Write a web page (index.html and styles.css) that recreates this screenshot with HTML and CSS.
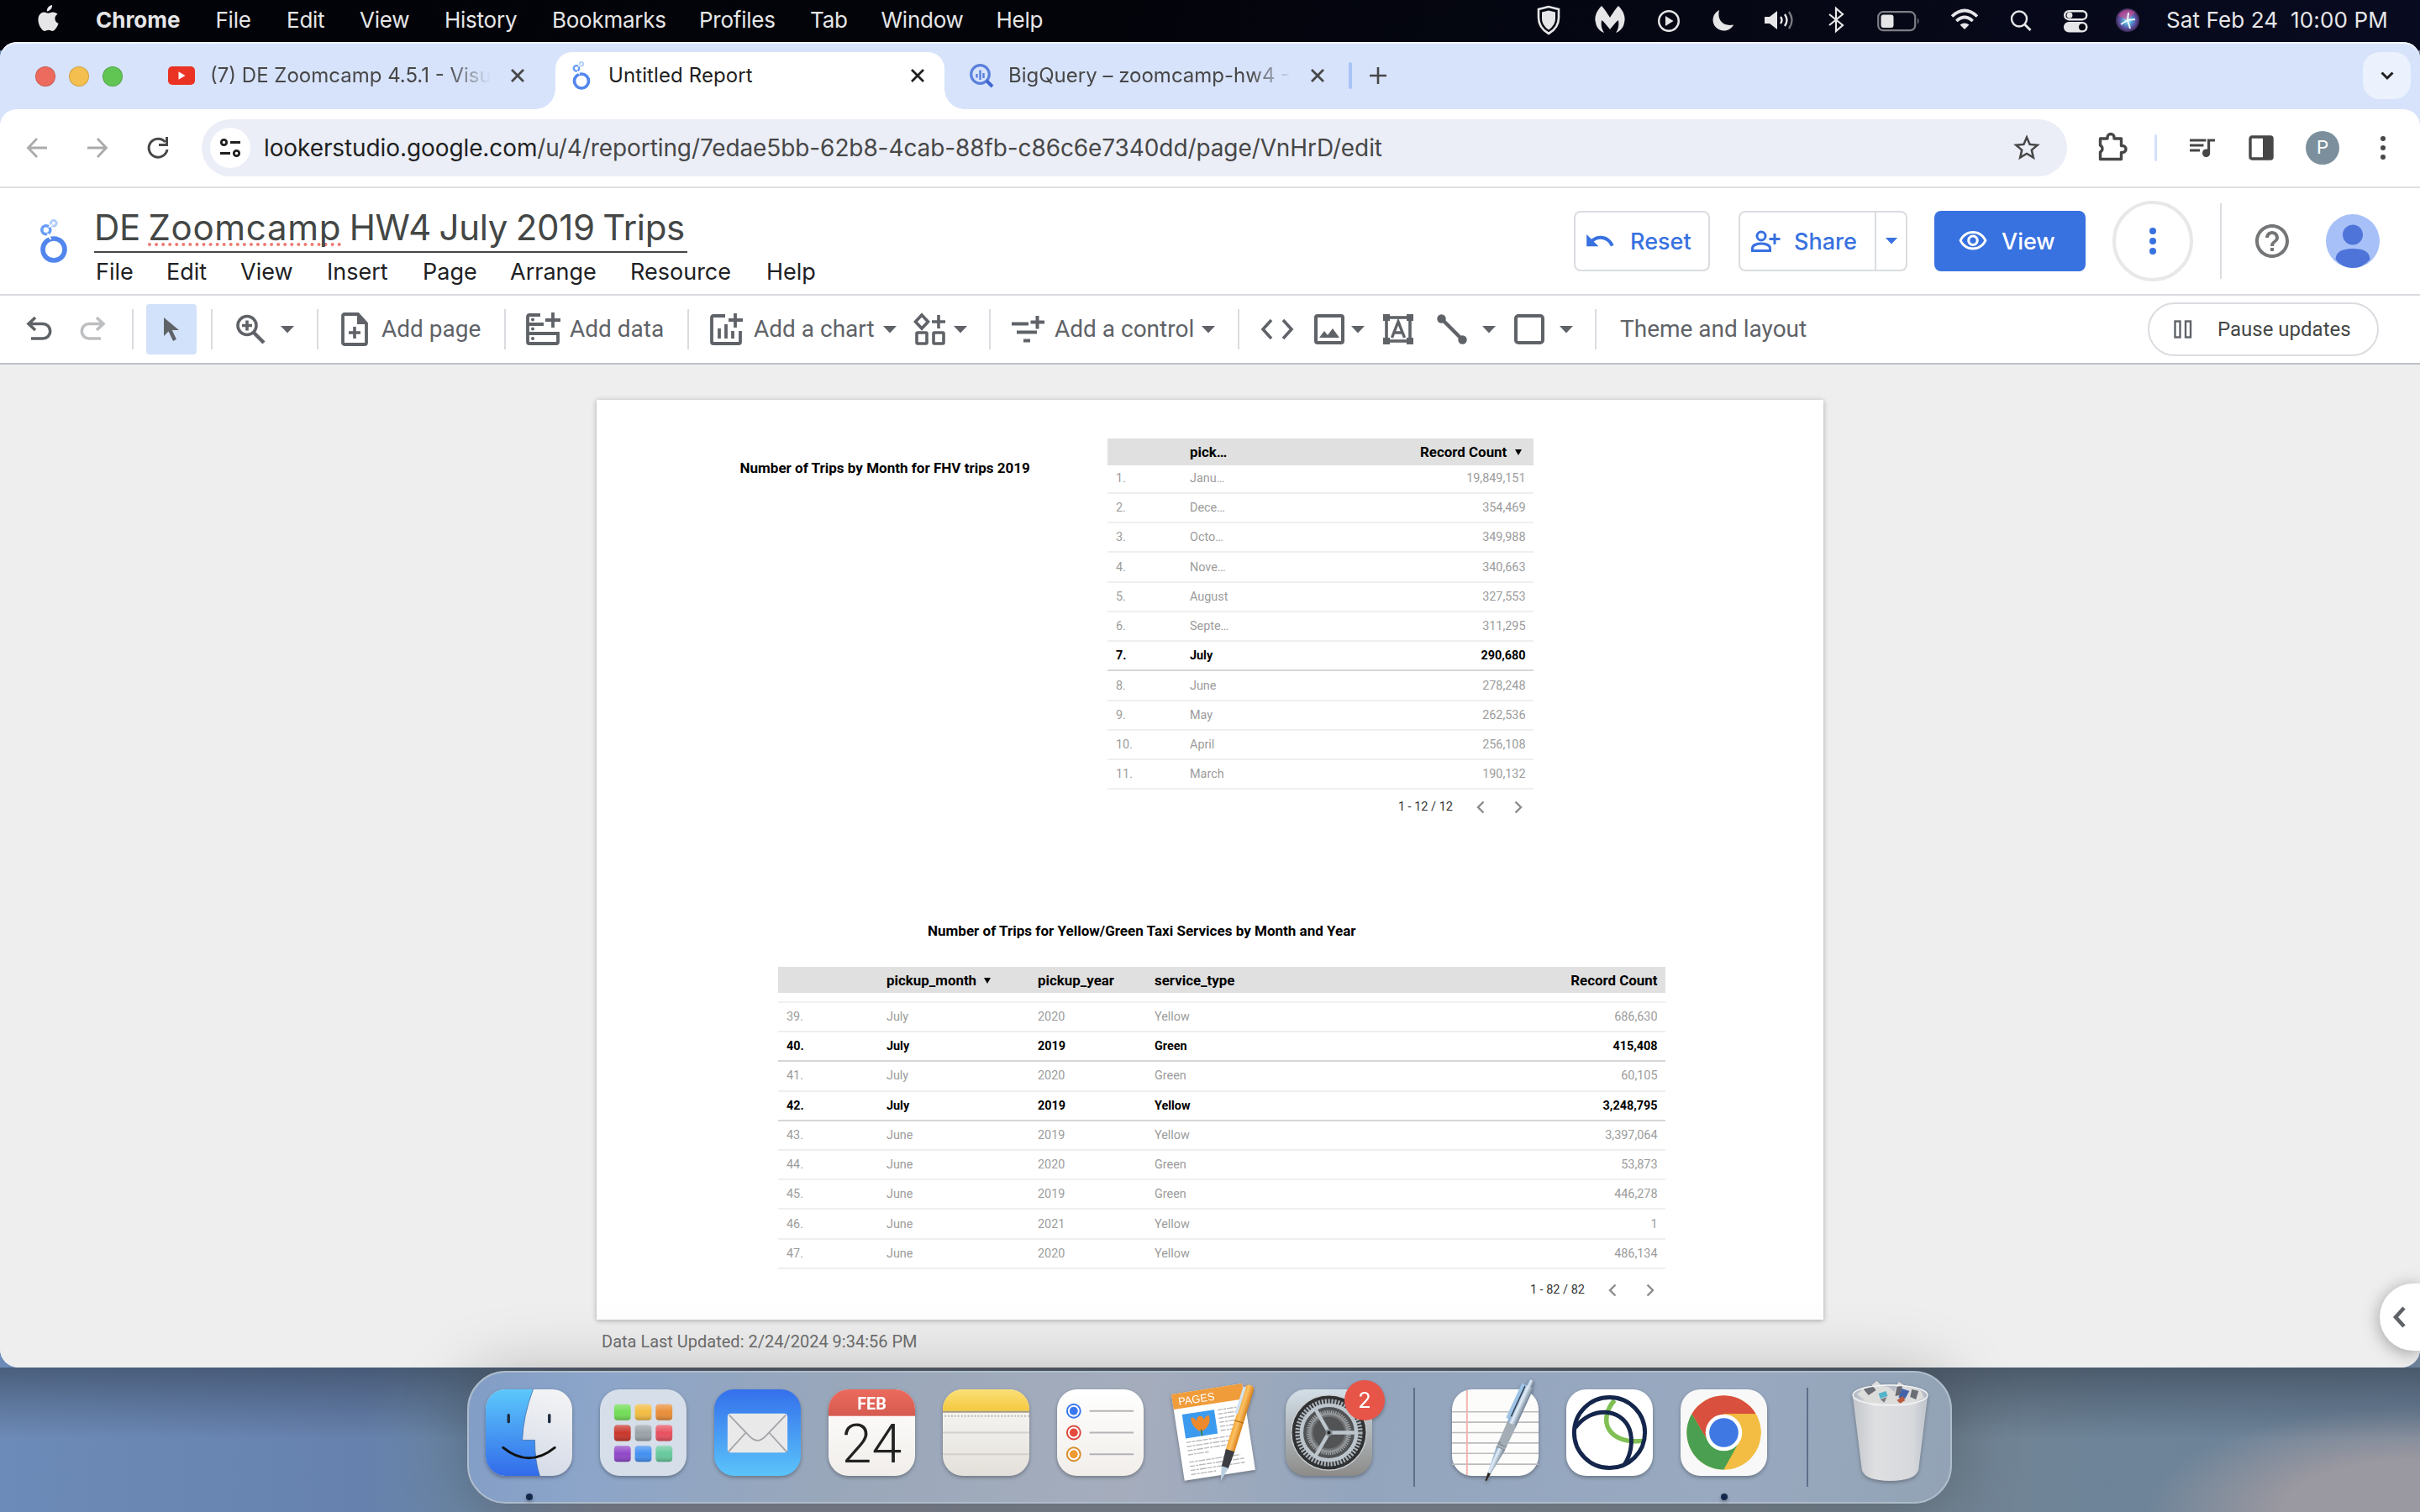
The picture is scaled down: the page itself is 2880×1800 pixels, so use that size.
FILE: index.html
```html
<!DOCTYPE html>
<html lang="en">
<head>
<meta charset="utf-8">
<title>Untitled Report</title>
<link rel="stylesheet" href="styles.css">
</head>
<body>
<svg class="defs" width="0" height="0">
  <defs>
    <linearGradient id="gFinder" x1="0" y1="0" x2="0" y2="1"><stop offset="0" stop-color="#5cc8fb"/><stop offset="1" stop-color="#326bea"/></linearGradient>
    <linearGradient id="gFace" x1="1" y1="0" x2=".7" y2="1"><stop offset="0" stop-color="#f5f5f6"/><stop offset="1" stop-color="#d5dbe7"/></linearGradient>
    <linearGradient id="gMail" x1="0" y1="0" x2="0" y2="1"><stop offset="0" stop-color="#3470ec"/><stop offset="1" stop-color="#5bc4fa"/></linearGradient>
    <linearGradient id="gPaper" x1="0" y1="0" x2="0" y2="1"><stop offset="0" stop-color="#fff"/><stop offset="1" stop-color="#f1eeea"/></linearGradient>
    <linearGradient id="gRed" x1="0" y1="0" x2="0" y2="1"><stop offset="0" stop-color="#ec6a5e"/><stop offset="1" stop-color="#d65a50"/></linearGradient>
    <linearGradient id="gYellow" x1="0" y1="0" x2="0" y2="1"><stop offset="0" stop-color="#fae078"/><stop offset="1" stop-color="#f5c83f"/></linearGradient>
    <linearGradient id="gNote" x1="0" y1="0" x2="0" y2="1"><stop offset="0" stop-color="#fbfaf8"/><stop offset="1" stop-color="#e3e0da"/></linearGradient>
    <linearGradient id="gMetal" x1="0" y1="0" x2="0" y2="1"><stop offset="0" stop-color="#d3dfe8"/><stop offset="1" stop-color="#8c8b89"/></linearGradient>
    <linearGradient id="gCan" x1="0" y1="0" x2="1" y2="0"><stop offset="0" stop-color="#c9cccf"/><stop offset=".3" stop-color="#e6e6e7"/><stop offset=".8" stop-color="#dedfe2"/><stop offset="1" stop-color="#c2c8d0"/></linearGradient>
    <linearGradient id="gPen" x1="0" y1="0" x2="1" y2="0"><stop offset="0" stop-color="#6f93b8"/><stop offset=".4" stop-color="#e4f0fa"/><stop offset="1" stop-color="#6d7d90"/></linearGradient>
    <linearGradient id="gOrange" x1="0" y1="0" x2="1" y2="0"><stop offset="0" stop-color="#f5a93a"/><stop offset=".4" stop-color="#fbc163"/><stop offset="1" stop-color="#d9801b"/></linearGradient>
    <linearGradient id="gTile" x1="0" y1="0" x2="0" y2="1"><stop offset="0" stop-color="#fff" stop-opacity=".3"/><stop offset=".5" stop-color="#fff" stop-opacity="0"/><stop offset="1" stop-color="#000" stop-opacity=".22"/></linearGradient>
    <radialGradient id="gSiri"><stop offset="0" stop-color="#e8fbff"/><stop offset=".35" stop-color="#57a8d8"/><stop offset=".75" stop-color="#5a4a9c"/><stop offset="1" stop-color="#3a2a50"/></radialGradient>
    <symbol id="looker" viewBox="0 0 32 52">
      <circle cx="16" cy="36" r="13" fill="none" stroke="#5286ee" stroke-width="5.6"/>
      <circle cx="6.8" cy="12.8" r="5" fill="none" stroke="#669df6" stroke-width="3.6"/>
      <circle cx="15.8" cy="4.8" r="3.4" fill="none" stroke="#aecbfa" stroke-width="2.8"/>
      <path d="M8.5 17 12.5 24M10 9.500l4-3" stroke="#fff" stroke-width="2"/>
    </symbol>
    <symbol id="close" viewBox="0 0 20 20"><path d="M3 3l14 14M17 3 3 17" fill="none" stroke="currentColor" stroke-width="2.8"/></symbol>
    <symbol id="caret" viewBox="0 0 16 9"><path d="M0 0h16l-8 8.500z" fill="currentColor"/></symbol>
    <symbol id="left" viewBox="0 0 10 16"><path d="M8.500 1.500 2 8l6.500 6.500" fill="none" stroke="currentColor" stroke-width="2.400"/></symbol>
    <symbol id="right" viewBox="0 0 10 16"><path d="M1.500 1.500 8 8l-6.500 6.500" fill="none" stroke="currentColor" stroke-width="2.400"/></symbol>
  </defs>
</svg>

<nav class="menubar">
  <svg class="apple" viewBox="0 0 26 32"><path fill="#e6e6e8" d="M18.100 0c.2 2.200-.7 4-1.900 5.300-1.200 1.300-2.800 2.200-4.400 2.100-.2-2.100.8-4 1.900-5.200C14.900.9 16.700.1 18.100 0zM24.600 10.700c-2 1.200-3.200 3-3.200 5.400 0 2.800 1.700 5 4.200 5.900-.6 1.900-1.600 3.700-2.700 5.300-1.200 1.800-2.500 3.600-4.400 3.600-1.900 0-2.500-1.200-4.700-1.200s-2.900 1.200-4.600 1.200c-1.900.1-3.400-1.900-4.600-3.700C1.900 23.500.2 16.700 2.600 12.300c1.200-2.300 3.500-3.800 5.900-3.800 2 0 3.700 1.300 4.900 1.300 1.100 0 3.300-1.500 5.600-1.300 1.500.1 3.900.6 5.600 2.200z"/></svg>
  <b>Chrome</b><span>File</span><span>Edit</span><span>View</span><span>History</span><span>Bookmarks</span><span>Profiles</span><span>Tab</span><span>Window</span><span>Help</span>
  <svg class="st" viewBox="0 0 36 36"><path d="M18 2 6 5v10c0 9 5 15 12 19 7-4 12-10 12-19V5z" fill="none" stroke="#e6e6e8" stroke-width="2.600"/><path d="M18 6.500 10 8.500v7c0 6 3 10.500 8 14 5-3.500 8-8 8-14v-7z" fill="#e6e6e8"/></svg>
  <svg class="st" viewBox="0 0 36 36"><path fill="#e6e6e8" d="M8 1c3 3 7 9 10 14 3-5 7-11 10-14 6 6 9 13 7 20-1 6-5 10-10 12 3-4 4-9 3-15-3 2-6 6-10 11-4-5-7-9-10-11-1 6 0 11 3 15C6 31 2 27 1 21-1 14 2 7 8 1z"/></svg>
  <svg class="st" viewBox="0 0 36 36"><circle cx="18" cy="19" r="11.800" fill="none" stroke="#e6e6e8" stroke-width="2.400"/><path d="M14 13l9.500 6L14 25z" fill="#e6e6e8"/></svg>
  <svg class="st" viewBox="0 0 36 36"><path fill="#e6e6e8" d="M13 6C5 10 3 20 9 26.500c6 6 17 5.500 21-3C18 26 10 18 13 6z"/></svg>
  <svg class="st" viewBox="0 0 36 36"><path fill="#e6e6e8" d="M0 14h6l9-7v22l-9-7H0z"/><path d="M19 14q3 4 0 8M24 11q5 7 0 14" fill="none" stroke="#e6e6e8" stroke-width="2.400"/><path d="M29 8q7 10 0 20" fill="none" stroke="#77787f" stroke-width="2.400"/></svg>
  <svg class="st" viewBox="0 0 36 36"><path d="M10 11l16 13-8 7V4l8 7-16 13" fill="none" stroke="#e6e6e8" stroke-width="2.200"/></svg>
  <svg class="bat" viewBox="0 0 52 36"><rect x="1.200" y="7.200" width="44" height="22" rx="6" fill="none" stroke="#7d7e85" stroke-width="2.200"/><rect x="4.500" y="10.500" width="15" height="15.500" rx="3" fill="#e6e6e8"/><path d="M48 14q3 4 0 8z" fill="#7d7e85"/></svg>
  <svg class="st" viewBox="0 0 36 36"><path d="M3 13.500q15-14 30 0M8.300 19q9.700-9 19.400 0" fill="none" stroke="#e6e6e8" stroke-width="3.600"/><path d="M12.500 23.500q5.500-4 11 0L18 29z" fill="#e6e6e8"/></svg>
  <svg class="st" viewBox="0 0 36 36"><circle cx="16" cy="16.500" r="9" fill="none" stroke="#e6e6e8" stroke-width="2.400"/><path d="M22.500 23l7 7" stroke="#e6e6e8" stroke-width="3"/></svg>
  <svg class="st" viewBox="0 0 36 36"><rect x="5.200" y="7.200" width="26" height="10" rx="5" fill="none" stroke="#e6e6e8" stroke-width="2.400"/><circle cx="11" cy="12.200" r="3.400" fill="#e6e6e8"/><rect x="4" y="20" width="28.500" height="12.500" rx="6.200" fill="#e6e6e8"/><circle cx="26" cy="26.200" r="4" fill="#05060f"/></svg>
  <svg class="st" viewBox="0 0 36 36"><circle cx="18" cy="18" r="14" fill="url(#gSiri)"/><path d="M7 13a12.500 12.500 0 0 1 20-4L18 18z" fill="#d2478e" opacity=".65"/><path d="M10 23l8-5 1-9M18 18l9-1M18 18l3 10" fill="none" stroke="#e6fbff" stroke-width="2"/></svg>
  <span class="clock">Sat Feb 24&nbsp; 10:00 PM</span>
</nav>

<main class="window">
  <div class="tabs">
    <div class="lights"><i class="r"></i><i class="y"></i><i class="g"></i></div>
    <div class="tab t1">
      <svg width="32" height="22" viewBox="0 0 32 22"><rect width="32" height="22" rx="5" fill="#ea3323"/><path d="M12.500 6.300 20.500 11l-8 4.700z" fill="#fff"/></svg>
      <span class="label fade">(7) DE Zoomcamp 4.5.1 - Visu</span>
      <svg class="x" width="20" height="20"><use href="#close"/></svg>
    </div>
    <div class="tab t2">
      <svg width="22" height="34"><use href="#looker"/></svg>
      <span class="label">Untitled Report</span>
      <svg class="x" width="20" height="20"><use href="#close"/></svg>
    </div>
    <div class="tab t3">
      <svg width="28" height="28" viewBox="0 0 28 28"><circle cx="12.500" cy="12.500" r="10.800" fill="none" stroke="#5b80dc" stroke-width="3.200"/><path d="M8.500 12v4.500M12.500 7.500V19M16.500 11v6" stroke="#5b80dc" stroke-width="2.400"/><path d="M20 20l7 7" stroke="#3f67cf" stroke-width="4"/></svg>
      <span class="label fade">BigQuery – zoomcamp-hw4 -</span>
      <svg class="x" width="20" height="20"><use href="#close"/></svg>
    </div>
    <i class="tabsep"></i>
    <svg class="plus" width="22" height="22" viewBox="0 0 22 22"><path d="M11 1v20M1 11h20" stroke="#474747" stroke-width="2.600"/></svg>
    <div class="tabmenu"><svg width="18" height="12" viewBox="0 0 18 12"><path d="M2.500 2.500 9 9l6.500-6.500" fill="none" stroke="#1f1f1f" stroke-width="3"/></svg></div>
  </div>

  <div class="omni">
    <svg width="24" height="24" viewBox="0 0 24 24"><path d="M12 1 1.500 12 12 23M2 12h22" fill="none" stroke="#ababab" stroke-width="2.800"/></svg>
    <svg width="24" height="24" viewBox="0 0 24 24"><path d="M12 1l10.500 11L12 23M22 12H0" fill="none" stroke="#ababab" stroke-width="2.800"/></svg>
    <svg width="28" height="28" viewBox="0 0 28 28"><path d="M25 16a11 11 0 1 1-2.500-9" fill="none" stroke="#474747" stroke-width="3"/><path d="M26 1v11H15v-3h8V1z" fill="#474747"/></svg>
    <div class="urlbar">
      <div class="chip"><svg width="26" height="24" viewBox="0 0 26 24"><g fill="none" stroke="#1f1f1f" stroke-width="2.800"><circle cx="5.500" cy="5.500" r="3.200"/><path d="M13 5.500h12M1 18.500h12"/><circle cx="20.500" cy="18.500" r="3.200"/></g></svg></div>
      <span class="url"><b>lookerstudio.google.com</b>/u/4/reporting/7edae5bb-62b8-4cab-88fb-c86c6e7340dd/page/VnHrD/edit</span>
      <svg class="star" width="38" height="38" viewBox="0 0 24 24"><path fill="#474747" d="M22 9.240l-7.190-.62L12 2 9.190 8.630 2 9.240l5.460 4.730L5.820 21 12 17.270 18.180 21l-1.630-7.030L22 9.240zM12 15.400l-3.760 2.270 1-4.280-3.320-2.880 4.380-.38L12 6.100l1.710 4.040 4.380.38-3.320 2.880 1 4.280L12 15.400z"/></svg>
    </div>
    <svg width="36" height="36" viewBox="0 0 36 36"><path d="M4.500 7.500H13V6a4 4 0 0 1 8 0v1.500h8.500V16H31a4 4 0 0 1 0 8h-1.500v8h-25v-8.500a4.500 4.500 0 0 0 0-8z" fill="none" stroke="#474747" stroke-width="3.400" stroke-linejoin="round" transform="translate(0 -.5)"/></svg>
    <i class="osep"></i>
    <svg width="36" height="36" viewBox="0 0 24 24"><path fill="#474747" d="M15 5H2v2h13V5zm-2 4H2v2h11V9zM2 15h8v-2H2v2zM16 5v8.200c-.3-.1-.7-.2-1-.2-1.700 0-3 1.300-3 3.200s1.300 3.200 3 3.200 3.100-1.300 3.100-3.200V7H22V5z"/></svg>
    <svg width="30" height="30" viewBox="0 0 30 30"><rect x="2" y="2" width="26" height="26" rx="2" fill="none" stroke="#474747" stroke-width="3.400"/><path d="M17 2h11v26H17z" fill="#474747"/></svg>
    <div class="pfp">P</div>
    <svg width="8" height="30" viewBox="0 0 8 30"><g fill="#474747"><circle cx="4" cy="4" r="3"/><circle cx="4" cy="15" r="3"/><circle cx="4" cy="26" r="3"/></g></svg>
  </div>

  <header class="head">
    <svg class="logo" width="32" height="52"><use href="#looker"/></svg>
    <div class="names">
      <div class="title">DE <u>Zoomcamp</u> HW4 July 2019 Trips</div>
      <div class="menu"><span>File</span><span>Edit</span><span>View</span><span>Insert</span><span>Page</span><span>Arrange</span><span>Resource</span><span>Help</span></div>
    </div>
    <div class="btn reset"><svg width="38" height="38" viewBox="0 0 24 24"><path fill="#3871e0" d="M12.500 8c-2.650 0-5.050.99-6.900 2.600L2 7v9h9l-3.620-3.620c1.390-1.160 3.160-1.880 5.120-1.880 3.540 0 6.550 2.310 7.600 5.500l2.370-.78C21.080 11.030 17.150 8 12.500 8z"/></svg><span>Reset</span></div>
    <div class="btn share"><svg width="36" height="28" viewBox="0 0 36 28"><g fill="none" stroke="#3871e0" stroke-width="3"><circle cx="13" cy="8" r="5"/><path d="M2.500 25.500v-3c0-4 6-5.500 10.500-5.500s10.500 1.500 10.500 5.500v3z"/><path d="M29 5v13M22.500 11.500h13"/></g></svg><span>Share</span><em><svg width="16" height="8"><use href="#caret"/></svg></em></div>
    <div class="btn view"><svg width="36" height="36" viewBox="0 0 24 24"><path fill="#fff" d="M12 6c3.790 0 7.170 2.130 8.820 5.500C19.170 14.870 15.790 17 12 17s-7.170-2.130-8.820-5.500C4.830 8.130 8.210 6 12 6m0-2C7 4 2.730 7.110 1 11.500 2.730 15.890 7 19 12 19s9.270-3.110 11-7.500C21.270 7.110 17 4 12 4zm0 5c1.380 0 2.500 1.120 2.500 2.500S13.380 14 12 14s-2.500-1.120-2.500-2.500S10.620 9 12 9m0-2c-2.480 0-4.500 2.020-4.500 4.500S9.520 16 12 16s4.500-2.020 4.500-4.500S14.480 7 12 7z"/></svg><span>View</span></div>
    <div class="more"><svg width="10" height="34" viewBox="0 0 10 34"><g fill="#3871e0"><circle cx="5" cy="5" r="4"/><circle cx="5" cy="17" r="4"/><circle cx="5" cy="29" r="4"/></g></svg></div>
    <i class="hsep"></i>
    <svg width="48" height="48" viewBox="0 0 24 24"><path fill="#747678" d="M11 18h2v-2h-2v2zm1-16C6.480 2 2 6.480 2 12s4.480 10 10 10 10-4.480 10-10S17.520 2 12 2zm0 18c-4.410 0-8-3.590-8-8s3.590-8 8-8 8 3.590 8 8-3.590 8-8 8zm0-14c-2.210 0-4 1.790-4 4h2c0-1.100.9-2 2-2s2 .9 2 2c0 2-3 1.750-3 5h2c0-2.250 3-2.500 3-5 0-2.210-1.790-4-4-4z"/></svg>
    <svg width="64" height="64" viewBox="0 0 64 64"><circle cx="32" cy="32" r="32" fill="#a7c1f8"/><circle cx="32" cy="24.500" r="12" fill="#4f74d9"/><path d="M11.500 54q0-13 20.500-13t20.500 13Q44 64 32 64t-20.500-10z" fill="#4f74d9"/></svg>
  </header>

  <div class="tools">
    <svg width="34" height="34" viewBox="0 0 34 34"><path d="M12 3 4 10.500 12 18M4 10.500h17a8.500 8.500 0 0 1 0 17.500H7" fill="none" stroke="#5f6368" stroke-width="3.600"/></svg>
    <svg width="34" height="34" viewBox="0 0 34 34"><path d="M22 3l8 7.500-8 7.500M30 10.500H13a8.500 8.500 0 0 0 0 17.500h14" fill="none" stroke="#bdbfc1" stroke-width="3.600"/></svg>
    <i></i>
    <div class="sel"><svg width="20" height="30" viewBox="0 0 20 30"><path d="M1 1v22l5.500-5.500L12 29l4-2-5.200-11H19z" fill="#5f6368"/></svg></div>
    <i></i>
    <svg width="36" height="36" viewBox="0 0 36 36"><circle cx="14" cy="13.500" r="11" fill="none" stroke="#5f6368" stroke-width="3.600"/><path d="M14 7.500v12M8 13.500h12" stroke="#5f6368" stroke-width="3.600"/><path d="M22 22l12 12" stroke="#5f6368" stroke-width="4.400"/></svg>
    <svg width="16" height="9"><use href="#caret"/></svg>
    <i></i>
    <svg width="32" height="40" viewBox="0 0 32 40"><path d="M2 4q0-2 2-2h16l10 11v23q0 2-2 2H4q-2 0-2-2z" fill="none" stroke="#5f6368" stroke-width="3.800"/><path d="M19 1v13h12z" fill="#5f6368"/><path d="M16 17v14M9 24h14" stroke="#5f6368" stroke-width="3.600"/></svg>
    <span>Add page</span>
    <i></i>
    <svg width="42" height="42" viewBox="0 0 42 42"><g fill="none" stroke="#5f6368" stroke-width="3.800"><path d="M18 4H5q-2 0-2 2v30q0 2 2 2h32q2 0 2-2V26H3M3 15h19"/><path d="M33 1v18M24 10h18"/></g><g fill="#5f6368"><circle cx="9" cy="9.500" r="2"/><circle cx="9" cy="20.500" r="2"/><circle cx="9" cy="32" r="2"/></g></svg>
    <span>Add data</span>
    <i></i>
    <svg width="40" height="40" viewBox="0 0 40 40"><g fill="none" stroke="#5f6368" stroke-width="3.800"><path d="M18 4H4q-2 0-2 2v29q0 2 2 2h30q2 0 2-2V22"/><path d="M11 19v12M19 14v17M27 22v9M30 1v17M22 9h17"/></g></svg>
    <span>Add a chart</span>
    <svg width="16" height="9"><use href="#caret"/></svg>
    <svg width="40" height="40" viewBox="0 0 40 40"><g fill="none" stroke="#5f6368" stroke-width="3.600"><path d="M10 3l7.500 8-7.500 8-7.500-8z"/><path d="M30 3v16M22 11h16"/><rect x="4" y="24" width="12" height="13" rx="1"/><rect x="24" y="24" width="12" height="13" rx="1"/></g></svg>
    <svg width="16" height="9"><use href="#caret"/></svg>
    <i></i>
    <svg width="40" height="34" viewBox="0 0 40 34"><path d="M0 10.500h20M6 20.500h24M14 30.500h8M30.500 1v15.500M22.500 8.500H39" stroke="#5f6368" stroke-width="4"/></svg>
    <span>Add a control</span>
    <svg width="16" height="9"><use href="#caret"/></svg>
    <i></i>
    <svg width="40" height="26" viewBox="0 0 40 26"><path d="M13 2 3 13l10 11M27 2l10 11-10 11" fill="none" stroke="#5f6368" stroke-width="3.600"/></svg>
    <svg width="36" height="36" viewBox="0 0 36 36"><rect x="2" y="2" width="32" height="32" rx="2" fill="none" stroke="#5f6368" stroke-width="4"/><path d="M6 28l6-8 4 5 6-8 8 11z" fill="#5f6368"/></svg>
    <svg width="16" height="9"><use href="#caret"/></svg>
    <svg width="36" height="36" viewBox="0 0 36 36"><rect x="4" y="4" width="28" height="28" fill="none" stroke="#5f6368" stroke-width="3.600"/><path fill="#5f6368" d="M0 0h8v8H0zM28 0h8v8h-8zM0 28h8v8H0zM28 28h8v8h-8z"/><path d="M10.500 28 18 9l7.500 19M13 22h10" fill="none" stroke="#5f6368" stroke-width="3.400"/></svg>
    <svg width="36" height="36" viewBox="0 0 36 36"><path d="M5 5l26 26" stroke="#5f6368" stroke-width="4.400"/><circle cx="5.500" cy="5.500" r="5.200" fill="#5f6368"/><circle cx="30.500" cy="30.500" r="5.200" fill="#5f6368"/></svg>
    <svg width="16" height="9"><use href="#caret"/></svg>
    <svg width="36" height="36" viewBox="0 0 36 36"><rect x="2" y="2" width="32" height="32" rx="3" fill="none" stroke="#5f6368" stroke-width="4"/></svg>
    <svg width="16" height="9"><use href="#caret"/></svg>
    <i></i>
    <span class="theme">Theme and layout</span>
    <div class="pause"><svg width="22" height="22" viewBox="0 0 22 22"><g fill="none" stroke="#5f6368" stroke-width="2.400"><rect x="1.500" y="1.500" width="6" height="19"/><rect x="14" y="1.500" width="6" height="19"/></g></svg><span>Pause updates</span></div>
  </div>

  <section class="canvas">
    <div class="page">
      <div class="top">
        <h2>Number of Trips by Month for FHV trips 2019</h2>
        <div class="tbl a">
          <div class="row th"><span></span><span>pick…</span><span class="n">Record Count <svg width="8" height="7" viewBox="0 0 16 14"><path d="M0 0h16L8 14z"/></svg></span></div>
          <div class="row"><span>1.</span><span>Janu…</span><span class="n">19,849,151</span></div>
          <div class="row"><span>2.</span><span>Dece…</span><span class="n">354,469</span></div>
          <div class="row"><span>3.</span><span>Octo…</span><span class="n">349,988</span></div>
          <div class="row"><span>4.</span><span>Nove…</span><span class="n">340,663</span></div>
          <div class="row"><span>5.</span><span>August</span><span class="n">327,553</span></div>
          <div class="row"><span>6.</span><span>Septe…</span><span class="n">311,295</span></div>
          <div class="row hot"><span>7.</span><span>July</span><span class="n">290,680</span></div>
          <div class="row"><span>8.</span><span>June</span><span class="n">278,248</span></div>
          <div class="row"><span>9.</span><span>May</span><span class="n">262,536</span></div>
          <div class="row"><span>10.</span><span>April</span><span class="n">256,108</span></div>
          <div class="row"><span>11.</span><span>March</span><span class="n">190,132</span></div>
          <div class="pager"><span>1 - 12 / 12</span><svg width="10" height="16"><use href="#left"/></svg><svg width="10" height="16"><use href="#right"/></svg></div>
        </div>
      </div>
      <h2 class="second">Number of Trips for Yellow/Green Taxi Services by Month and Year</h2>
      <div class="tbl b">
        <div class="row th"><span></span><span>pickup_month <svg width="8" height="7" viewBox="0 0 16 14"><path d="M0 0h16L8 14z"/></svg></span><span>pickup_year</span><span>service_type</span><span class="n">Record Count</span></div>
        <div class="cut"></div>
        <div class="row"><span>39.</span><span>July</span><span>2020</span><span>Yellow</span><span class="n">686,630</span></div>
        <div class="row hot"><span>40.</span><span>July</span><span>2019</span><span>Green</span><span class="n">415,408</span></div>
        <div class="row"><span>41.</span><span>July</span><span>2020</span><span>Green</span><span class="n">60,105</span></div>
        <div class="row hot"><span>42.</span><span>July</span><span>2019</span><span>Yellow</span><span class="n">3,248,795</span></div>
        <div class="row"><span>43.</span><span>June</span><span>2019</span><span>Yellow</span><span class="n">3,397,064</span></div>
        <div class="row"><span>44.</span><span>June</span><span>2020</span><span>Green</span><span class="n">53,873</span></div>
        <div class="row"><span>45.</span><span>June</span><span>2019</span><span>Green</span><span class="n">446,278</span></div>
        <div class="row"><span>46.</span><span>June</span><span>2021</span><span>Yellow</span><span class="n">1</span></div>
        <div class="row"><span>47.</span><span>June</span><span>2020</span><span>Yellow</span><span class="n">486,134</span></div>
        <div class="pager"><span>1 - 82 / 82</span><svg width="10" height="16"><use href="#left"/></svg><svg width="10" height="16"><use href="#right"/></svg></div>
      </div>
    </div>
    <div class="updated">Data Last Updated: 2/24/2024 9:34:56 PM</div>
    <div class="drawer"><svg width="16" height="26" viewBox="0 0 16 26"><path d="M13 2 3 13l10 11" fill="none" stroke="#5f6368" stroke-width="4.600"/></svg></div>
  </section>
</main>

<footer class="dock">
  <div class="app run"><svg viewBox="0 0 104 104"><defs><clipPath id="rr"><rect width="104" height="104" rx="24"/></clipPath></defs><g clip-path="url(#rr)"><rect width="104" height="104" fill="url(#gFace)"/><path d="M0 0h57Q45 32 44 61h15q0 25 6 43H0z" fill="url(#gFinder)"/><path d="M57 0Q45 32 44 61h15q0 25 6 43" fill="none" stroke="#3c6fa8" stroke-width=".8"/></g><path d="M27.500 31v8M76.500 31v8" stroke="#1c2a3c" stroke-width="3.400" stroke-linecap="round"/><path d="M21 70q31 25 62 0" fill="none" stroke="#111" stroke-width="3" stroke-linecap="round"/></svg></div>
  <div class="app"><svg viewBox="0 0 104 104"><rect width="104" height="104" rx="24" fill="#d6dee9"/>
    <rect x="17" y="18" width="20" height="19" rx="4" fill="#72dd57"/><rect x="42" y="18" width="20" height="19" rx="4" fill="#f3bc42"/><rect x="67" y="18" width="20" height="19" rx="4" fill="#e98e38"/><rect x="17" y="43" width="20" height="19" rx="4" fill="#c9372b"/><rect x="42" y="43" width="20" height="19" rx="4" fill="#9aa3a8"/><rect x="67" y="43" width="20" height="19" rx="4" fill="#e8505f"/><rect x="17" y="68" width="20" height="19" rx="4" fill="#9147c9"/><rect x="42" y="68" width="20" height="19" rx="4" fill="#4290f2"/><rect x="67" y="68" width="20" height="19" rx="4" fill="#66c99c"/>
    <g fill="url(#gTile)"><rect x="17" y="18" width="20" height="19" rx="4"/><rect x="42" y="18" width="20" height="19" rx="4"/><rect x="67" y="18" width="20" height="19" rx="4"/><rect x="17" y="43" width="20" height="19" rx="4"/><rect x="42" y="43" width="20" height="19" rx="4"/><rect x="67" y="43" width="20" height="19" rx="4"/><rect x="17" y="68" width="20" height="19" rx="4"/><rect x="42" y="68" width="20" height="19" rx="4"/><rect x="67" y="68" width="20" height="19" rx="4"/></g></svg></div>
  <div class="app"><svg viewBox="0 0 104 104"><rect width="104" height="104" rx="24" fill="url(#gMail)"/><rect x="16" y="29" width="72" height="47" rx="4" fill="#e9e9ea"/><path d="M17 75l21-23M87 75L66 52M18 31l25 26q9 9 18 0l25-26" fill="none" stroke="#a2a4a8" stroke-width="1.800"/></svg></div>
  <div class="app"><svg viewBox="0 0 104 104"><g clip-path="url(#rr)"><rect width="104" height="104" fill="url(#gPaper)"/><rect width="104" height="32" fill="url(#gRed)"/></g><text x="52" y="24.500" class="mon">FEB</text><text x="52" y="87.500" class="day">24</text></svg></div>
  <div class="app"><svg viewBox="0 0 104 104"><g clip-path="url(#rr)"><rect width="104" height="104" fill="url(#gNote)"/><rect width="104" height="26" fill="url(#gYellow)"/><path d="M0 27h104" stroke="#a59a7c" stroke-width="2"/><path d="M2 32h102" stroke="#bbb" stroke-width="2" stroke-dasharray="2 2"/><path d="M0 52h104M0 78h104" stroke="#d2d0cc" stroke-width="2"/></g></svg></div>
  <div class="app"><svg viewBox="0 0 104 104"><rect width="104" height="104" rx="24" fill="url(#gPaper)"/><g fill="#fff" stroke-width="2"><circle cx="20" cy="26" r="8" stroke="#3a78f0"/><circle cx="20" cy="52" r="8" stroke="#d9473c"/><circle cx="20" cy="78" r="8" stroke="#d58c2c"/></g><circle cx="20" cy="26" r="5" fill="#3a78f0"/><circle cx="20" cy="52" r="5" fill="#e54a3e"/><circle cx="20" cy="78" r="5" fill="#ee9a35"/><path d="M39 26h53M39 52h53M39 78h53" stroke="#b4b4b6" stroke-width="2"/></svg></div>
  <div class="app"><svg viewBox="0 0 104 104"><g transform="translate(0 6) rotate(-8.700)"><rect width="86" height="105" fill="#fff"/><rect width="86" height="18.500" fill="#f09c3a"/><text x="7" y="14.500" class="pg">PAGES</text><rect x="9" y="26" width="39" height="29" fill="#3b9bee"/><path d="M19 31q4 0 6 5 2-6 5-5 3 0 4 5 3-5 7-4 1 8-5 14-3 3-7 3t-6-4q-5-6-4-14z" fill="#ef8a2c"/><path d="M29 47v8" stroke="#3f7a31" stroke-width="1.500"/><path d="M52 27h23M52 32h22M52 37h20M52 42h19M52 47h18M52 52h16M9 60h55M9 65h52M9 70h58M9 75h25M9 84h62M9 89h66M9 94h66M9 99h30" stroke="#b9b9bc" stroke-width="1.400" stroke-dasharray="6 1.200 3 1 8 1.200"/></g><g transform="translate(95 -5) rotate(17.200)"><rect x="-5.500" y="0" width="11" height="86" rx="4.500" fill="url(#gOrange)"/><path d="M-5.500 82h11l-1.200 22h-8.600z" fill="#3b3d42"/><path d="M-4.300 103h8.600L0 121z" fill="#b9cfdf"/><path d="M-5.500 46h11" stroke="#b06a14" stroke-width="1.200"/><path d="M-6 4v34" stroke="#cfe2f3" stroke-width="3.400"/></g></svg></div>
  <div class="app"><svg viewBox="0 0 104 104"><rect width="104" height="104" rx="24" fill="url(#gMetal)"/><circle cx="52" cy="52" r="45" fill="#303133"/><circle cx="52" cy="52" r="37.500" fill="none" stroke="#aab2b8" stroke-width="6" stroke-dasharray="2.200 1.700"/><circle cx="52" cy="52" r="33" fill="#505254" stroke="#bcc5cb" stroke-width="4.500"/><circle cx="52" cy="52" r="25" fill="#6d6f71" stroke="#a0a4a7" stroke-width="4" stroke-dasharray="1.300 1.300"/><circle cx="52" cy="52" r="22.500" fill="none" stroke="#8f9396" stroke-width="2.500"/><circle cx="52" cy="52" r="19" fill="#515355"/><path d="M52 52h33M52 52 36 24M52 52 36 80" stroke="#bcc5cb" stroke-width="4.500"/><circle cx="52" cy="52" r="4" fill="#7f878c"/><circle cx="52" cy="52" r="2" fill="#222"/><circle cx="52" cy="52" r="45" fill="none" stroke="#c9ced1" stroke-width="1.200"/></svg><span class="badge">2</span></div>
  <i class="first"></i>
  <div class="app"><svg viewBox="0 0 104 104"><rect width="104" height="104" rx="24" fill="#fcfcfb"/><path d="M0 27h104M0 39.500h104M0 52h104M0 64.500h104M0 77h104M0 90h104" stroke="#babbbd" stroke-width="1.700"/><path d="M18 1v102" stroke="#f1b4ac" stroke-width="2"/><g transform="translate(96 -11) rotate(24.600)"><rect x="-3.500" y="0" width="7" height="9" rx="1" fill="url(#gPen)"/><rect x="-6" y="8" width="12" height="54" rx="2" fill="url(#gPen)"/><path d="M-6 58H6l-.5 34h-11z" fill="#a4adb6"/><path d="M-5.500 90h11L1 133h-2z" fill="url(#gPen)"/><path d="M-2.500 84h-3M-5.500 86h11M-5.500 90h11" stroke="#7c858e" stroke-width="1"/><path d="M-1.800 123h3.600L1 133h-2z" fill="#2b2622"/><path d="M-7.500 8v46" stroke="#9fc4e6" stroke-width="4"/><path d="M-4.500 10v40" stroke="#35465a" stroke-width="1.600"/></g></svg></div>
  <div class="app"><svg viewBox="0 0 104 104"><rect width="104" height="104" rx="24" fill="#fff"/><path d="M58 13C38 36 48 66 92 62" fill="none" stroke="#7fbf54" stroke-width="5.500"/><g fill="none" stroke="#14264b" stroke-width="5"><circle cx="52" cy="52" r="42.500"/><path d="M11 46C30 20 66 22 76 48c5 15 1 32-6 42"/></g></svg></div>
  <div class="app run"><svg viewBox="0 0 104 104"><rect width="104" height="104" rx="24" fill="#f8f8f9"/><circle cx="52" cy="52" r="44.500" fill="#f2bd42"/><path d="M52 52 33.500 63 13.500 29.500A44.500 44.500 0 0 1 90.500 29.500H52z" fill="#d9503f"/><path d="M13.500 29.500 33.500 63 52 52l18.500 11L52 96.500A44.500 44.500 0 0 1 13.500 29.500z" fill="#4a9f50"/><path d="M52 29.500h38.500A44.500 44.500 0 0 1 52 96.500L71.500 63z" fill="#f2bd42"/><circle cx="52" cy="52" r="22" fill="#fff"/><circle cx="52" cy="52" r="17.500" fill="#3f78e3"/></svg></div>
  <i></i>
  <div class="app"><svg viewBox="0 0 104 104"><ellipse cx="52" cy="6" rx="45" ry="12" fill="#b7bec8"/><path d="M12 6 22-3l6-1 8-6 6 6 8 1 7 6 5-12 10 6 8 2 9 3 4 9-14 9H30z" fill="#dcdcdb"/><path d="M20 0l10-5 5 6-9 6zM60-3l7-2-3 12-6 1zM78 0l8 2-3 10-7-3z" fill="#6a6d74"/><path d="M66-1l9 3-5 9-8-1z" fill="#4463a8"/><path d="M38 5l9-3 2 6-9 3z" fill="#54b4c9"/><path d="M60 13l7-5 3 5-6 4z" fill="#b65b3f"/><path d="M40 12l8-3-3 7z" fill="#7a7d83"/><path d="M7 8q45 20 90 0L86 97q-4 13-34 13T18 97z" fill="url(#gCan)" opacity=".94"/><ellipse cx="52" cy="7" rx="45" ry="12" fill="none" stroke="#f5f6f8" stroke-width="1.400"/></svg></div>
</footer>
</body>
</html>
```
FILE: styles.css
```css
* { box-sizing: border-box; }
body {
  margin: 0;
  width: 2880px;
  height: 1800px;
  overflow: hidden;
  display: flex;
  flex-direction: column;
  font-family: Inter, "Liberation Sans", sans-serif;
  background:
    linear-gradient(90deg, #020308, #03040a 45%, #080b20) top / 100% 60px no-repeat,
    linear-gradient(180deg, rgba(40,50,65,.5) 0, rgba(40,50,65,.28) 35px, rgba(40,50,65,0) 85px) 0 1628px / 100% 172px no-repeat,
    radial-gradient(ellipse 330px 125px at 2880px 1800px, #9a98a0 50%, rgba(152,150,160,0) 100%),
    linear-gradient(90deg, #6d8bb8, #6681ad 15%, #6b86a4 19%, #7d8290 25%, #7e8690 60%, #75838f 75%, #6d8499 88%, #6c8198);
}
svg { display: block; flex: none; overflow: visible; }
.defs { position: absolute; }
span, b { white-space: nowrap; }

/* macOS menu bar */
.menubar {
  height: 50px;
  flex: none;
  padding-left: 44px;
  display: grid;
  align-items: center;
  grid-template-columns: 70px 142.500px 84.500px 87px 101px 128px 175px 132px 84.500px 137px 639.500px 73px 70px 65px 67px 67px 67px 86px 67px 65px 62px 64px 300px;
  color: #e6e6e8;
  font-size: 26px;
  letter-spacing: -.25px;
  line-height: 48px;
}
.menubar span, .menubar b { height: 50px; }
.menubar b { letter-spacing: 0; }
.menubar .clock { letter-spacing: .12px; }
.apple { width: 26px; height: 32px; margin-top: -6px; }
.st { width: 36px; height: 36px; margin-top: -2px; }
.bat { width: 52px; height: 36px; margin-top: -1px; }

/* browser window */
.window {
  height: 1578px;
  flex: none;
  display: flex;
  flex-direction: column;
  background: #d7e3fb;
  border-radius: 20px 20px 22px 22px;
  overflow: hidden;
  box-shadow: inset 0 2px 0 #f0f4fd;
}
.tabs { height: 80px; flex: none; display: flex; align-items: stretch; font-size: 24px; color: #474747; }
.lights { display: flex; gap: 16px; padding: 29px 0 0 42px; width: 200px; }
.lights i { width: 24px; height: 24px; border-radius: 50%; border: 1px solid rgba(0,0,0,.15); }
.lights .r { background: #ed6a5e; }
.lights .y { background: #f4bf4f; }
.lights .g { background: #61c554; }
.tab { display: flex; align-items: center; padding-bottom: 1px; }
.label { overflow: hidden; line-height: 40px; }
.fade { -webkit-mask-image: linear-gradient(90deg, #000 85%, transparent); mask-image: linear-gradient(90deg, #000 85%, transparent); }
.t1 { width: 461px; }
.t1 .label { margin-left: 18px; width: 334px; }
.t1 .x { margin-left: 22px; }
.t2 { position: relative; width: 463px; margin-top: 12px; padding: 0 0 13px 20px; background: #fff; border-radius: 20px 20px 0 0; color: #1f1f1f; }
.t2 .label { margin-left: 21px; width: 337px; letter-spacing: .1px; }
.t2 .x { margin-left: 21px; }
.t2::before, .t2::after { content: ""; position: absolute; bottom: 0; width: 24px; height: 24px; }
.t2::before { left: -24px; background: radial-gradient(circle at 0 0, transparent 23.500px, #fff 24px); }
.t2::after { right: -24px; background: radial-gradient(circle at 100% 0, transparent 23.500px, #fff 24px); }
.t3 { padding-left: 30px; width: 481px; }
.t3 .label { margin-left: 18px; width: 338px; }
.t3 .x { margin-left: 20px; }
.tabsep { width: 4px; height: 32px; background: #a8c4f7; border-radius: 2px; align-self: center; }
.plus { margin: 29px 0 0 20px; }
.tabmenu { width: 57px; height: 56px; margin: 12px 11px 0 auto; border-radius: 20px; background: #ebf2fd; display: flex; align-items: center; justify-content: center; }

.omni {
  height: 92px;
  flex: none;
  padding-left: 32px;
  background: #fff;
  border-radius: 20px 20px 0 0;
  display: grid;
  align-items: center;
  grid-template-columns: 72px 70px 66px 2255px 69px 39px 73px 68px 88px 20px;
}
.urlbar { width: 2220px; height: 68px; border-radius: 34px; background: #ebeef7; display: flex; align-items: center; padding-left: 10px; }
.chip { width: 48px; height: 48px; border-radius: 50%; background: #fff; display: flex; align-items: center; justify-content: center; }
.url { margin-left: 16px; font-size: 28px; color: #474747; letter-spacing: -.1px; line-height: 40px; }
.url b { font-weight: 400; color: #1f1f1f; }
.star { margin: 0 29px 0 auto; }
.osep { width: 3px; height: 32px; background: #d3e2fb; border-radius: 2px; }
.pfp { width: 40px; height: 40px; border-radius: 50%; background: #7b909c; color: #fff; font: 22px/40px Roboto, sans-serif; text-align: center; }

/* report header */
.head {
  height: 130px;
  flex: none;
  background: #fff;
  border-top: 2px solid #e0e0e1;
  border-bottom: 2px solid #dadce0;
  display: flex;
  align-items: center;
}
.logo { margin: 0 0 0 48px; }
.names { width: 1761px; margin-left: 32px; align-self: stretch; }
.title { width: 706px; height: 77px; border-bottom: 2px solid #444746; font-size: 42px; line-height: 94px; color: #444746; letter-spacing: -.3px; word-spacing: -2px; white-space: nowrap; }
.title u { letter-spacing: .7px; text-decoration: underline dotted #ee7a70 4px; text-underline-offset: 3px; text-decoration-skip-ink: none; }
.menu { display: grid; grid-template-columns: 84px 88px 103px 114px 104px 143px 162px 100px; padding-left: 2px; font-size: 27px; line-height: 46px; color: #202124; letter-spacing: 0; }
.btn { height: 72px; display: flex; align-items: center; border: 2px solid #dadce0; border-radius: 8px; color: #3871e0; font-size: 27px; font-weight: 500; }
.reset { width: 162px; padding-left: 10px; }
.reset span { margin-left: 17px; }
.share { width: 201px; margin-left: 34px; padding-left: 12px; }
.share span { margin-left: 16px; }
.share em { margin-left: auto; width: 37px; height: 68px; border-left: 2px solid #dadce0; display: flex; align-items: center; justify-content: center; }
.view { width: 180px; margin-left: 32px; padding-left: 26px; background: #3871e0; border-color: #3871e0; color: #fff; }
.view span { margin-left: 16px; }
.more { width: 96px; height: 96px; margin-left: 32px; border: 4px solid #e8e8e9; border-radius: 50%; display: flex; align-items: center; justify-content: center; }
.hsep { width: 2px; height: 90px; margin: 0 35.500px 0 32px; background: #dadce0; }
.head > svg:last-child { margin-left: 40px; }

/* editor toolbar */
.tools {
  height: 82px;
  flex: none;
  background: #fff;
  border-bottom: 2px solid #bdc1c6;
  padding-left: 30px;
  display: grid;
  align-items: center;
  grid-template-columns: 63px 64px 17px 77px 29px 54px 43px 29px 48px 146px 25px 53px 140px 27px 52px 154px 36px 48px 42px 27px 51px 175px 43px 27px 64px 44px 38px 64px 54px 38px 54px 42px 30px 628px 300px;
  font: 28px/40px Roboto, sans-serif;
  color: #5f6368;
}
.tools i { width: 2px; height: 48px; background: #dadce0; }
.sel { width: 60px; height: 60px; background: #d3e2fb; border-radius: 4px; display: flex; align-items: center; justify-content: center; }
.pause { width: 275px; height: 64px; border: 2px solid #dadce0; border-radius: 32px; display: flex; align-items: center; padding-left: 29px; font-size: 24px; color: #444746; }
.pause span { margin-left: 30px; }

/* canvas */
.canvas { position: relative; flex: 1; background: #eee; padding: 42px 0 0 710px; font-family: Roboto, sans-serif; }
.page { width: 1460px; height: 1095px; background: #fff; box-shadow: 0 1px 6px rgba(0,0,0,.3); overflow: hidden; padding-top: 46px; }
h2 { margin: 0; font-size: 17.040px; line-height: 20px; font-weight: 700; color: #000; white-space: nowrap; }
.top { display: flex; }
.top h2 { width: 437.500px; margin: 24.500px 0 0 170.500px; }
.second { margin: 115.500px 0 0 394px; }
.tbl { font-size: 14.400px; color: #9c9c9c; }
.row { display: grid; align-items: center; height: 35.240px; border-bottom: 2px solid #efefef; padding: 0 9.500px 0 10px; }
.a { width: 507px; }
.b { width: 1056px; margin: 33px 0 0 216px; }
.a .row { grid-template-columns: 88px 150px 1fr; }
.b .row { grid-template-columns: 119px 180px 139px 200px 1fr; }
.row.th { height: 31.500px; background: #e0e0e0; border: 0; color: #000; font-weight: 700; font-size: 16.900px; }
.th svg { display: inline-block; vertical-align: 2px; margin: 0 5px 0 5px; }
.row.hot { color: #000; font-weight: 700; border-color: #d6d6d6; }
.n { text-align: right; }
.a .row:nth-child(2) { height: 34.500px; padding-bottom: 1.500px; }
.cut { height: 11.500px; border-bottom: 2px solid #f0f0f0; }
.pager { display: flex; align-items: center; height: 41px; justify-content: flex-end; color: #333; font-size: 14.500px; padding-right: 13px; }
.a .pager { margin-bottom: 1px; }
.b .pager { height: 50px; }
.pager svg { color: #8b8b8b; margin-left: 28px; }
.pager svg + svg { margin-left: 35px; }
.updated { margin: 16px 0 0 6px; font-size: 20px; line-height: 20px; color: #6e6e6e; }
.drawer { position: absolute; right: 0; bottom: 20px; width: 48px; height: 80px; border-radius: 40px 0 0 40px; background: #fff; box-shadow: 0 3px 20px rgba(0,0,0,.35); display: flex; align-items: center; padding-left: 16px; }

/* dock */
.dock {
  position: relative;
  width: 1767px;
  height: 158px;
  margin: 4px 0 0 556px;
  flex: none;
  display: flex;
  gap: 33px;
  padding: 20px 20px 0;
  border: 2px solid #aebccb;
  border-radius: 46px;
  background: linear-gradient(100deg, #829dc6 0, #8ca5c9 9%, #99a7ba 25%, #a5adbd 45%, #93a5bd 60%, #98a9c0 85%, #93a3b5 100%);
  box-shadow: 0 4px 80px rgba(0,0,0,.25);
}
.dock > i { width: 2px; height: 118px; margin: -2px 13px 0 14px; background: #5d6f8a; }
.dock > .first { margin: -2px 11px 0 16px; }
.app { position: relative; width: 103px; height: 103px; flex: none; filter: drop-shadow(0 2px 2px rgba(0,0,0,.3)); }
.app svg { width: 103px; height: 103px; }
.run::after { content: ""; position: absolute; left: 48px; top: 124px; width: 8px; height: 8px; border-radius: 50%; background: #14294a; }
.mon { font: 700 20px Roboto, sans-serif; fill: #fff; text-anchor: middle; }
.day { font: 300 65px Roboto, sans-serif; fill: #222; text-anchor: middle; }
.pg { font: 13px "Liberation Sans", sans-serif; fill: #fff; }
.badge { position: absolute; left: 70px; top: -11px; width: 48px; height: 48px; border-radius: 50%; background: #e65548; color: #fff; font: 26px/48px Inter, sans-serif; text-align: center; }
```
